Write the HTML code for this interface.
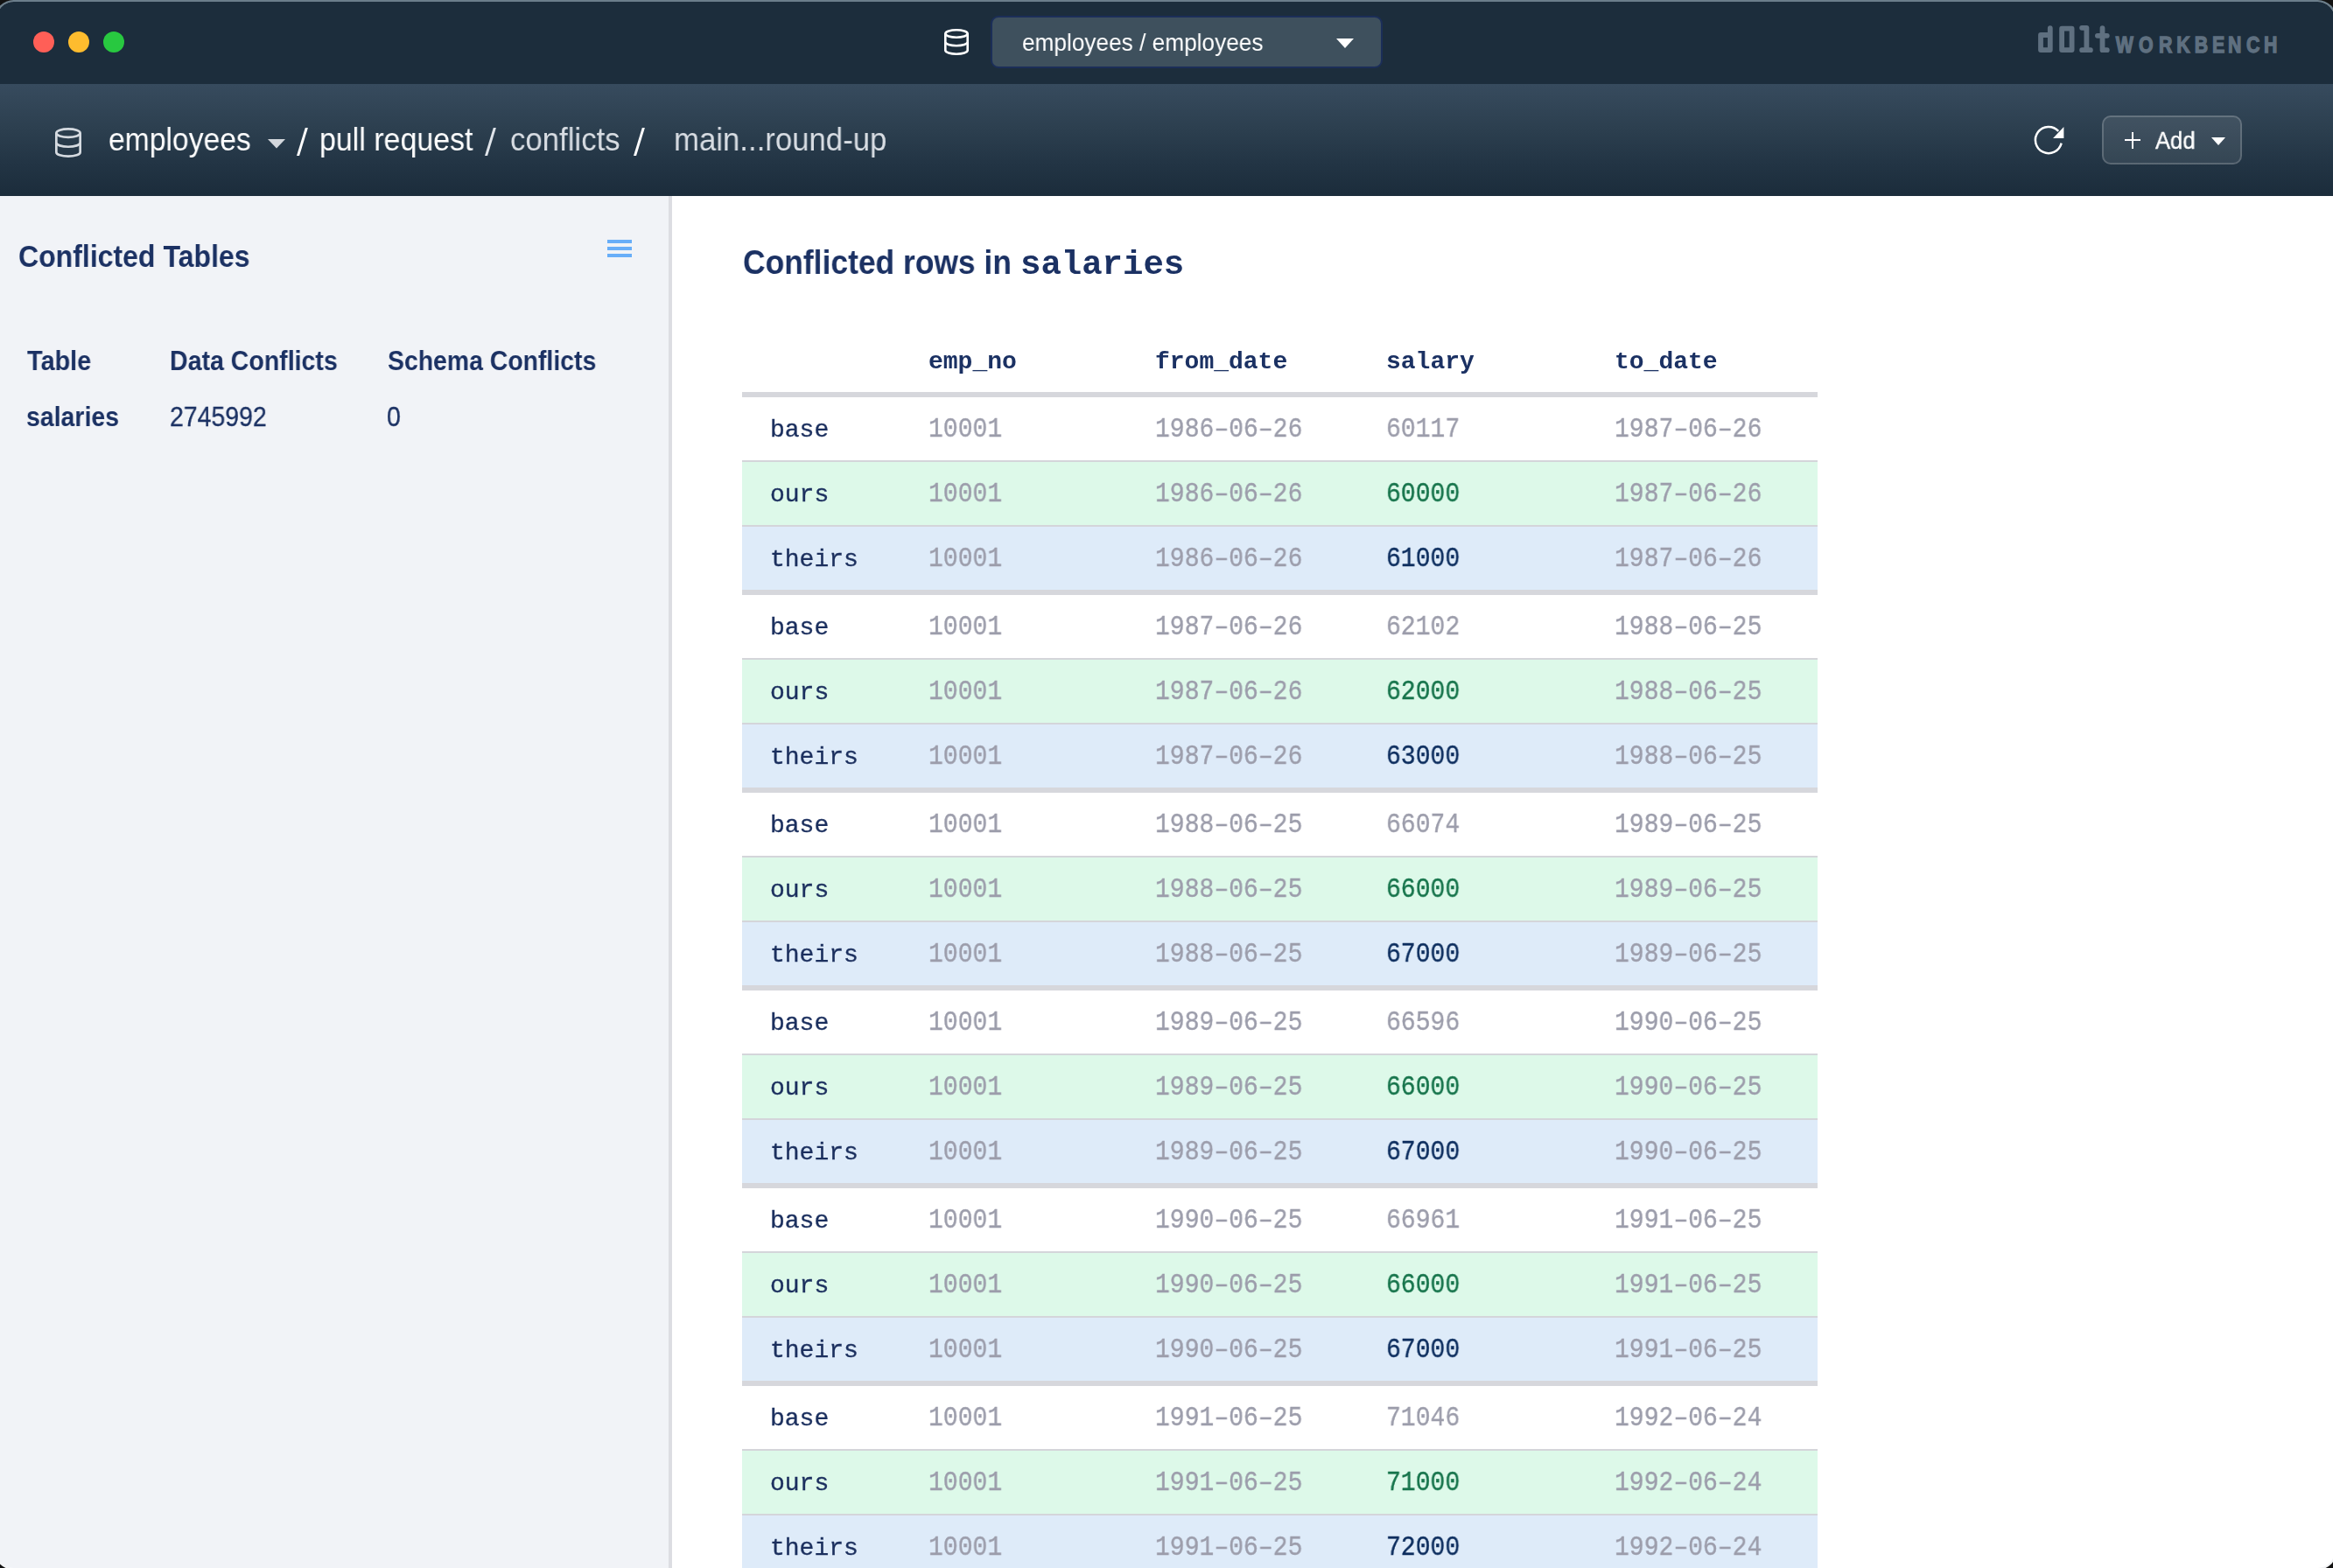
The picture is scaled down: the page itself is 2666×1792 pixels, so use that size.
<!DOCTYPE html>
<html><head><meta charset="utf-8"><title>Dolt Workbench</title>
<style>
html,body{margin:0;padding:0;}
body{width:2666px;height:1792px;overflow:hidden;position:relative;background:#121212;font-family:'Liberation Sans', sans-serif;}
#strip{position:absolute;left:-6px;top:0;width:2676px;height:1793.5px;border-radius:21.5px;background:linear-gradient(180deg,#6b7e8b 0px,#6b7e8b 60px,#f2f3f5 1600px);}
#win{position:absolute;left:-4px;top:2px;width:2672px;height:1789.5px;border-radius:19.5px;overflow:hidden;background:#ffffff;}
.t{position:absolute;white-space:pre;will-change:transform;}
.ab{position:absolute;}
.dot{position:absolute;width:24px;height:24px;border-radius:50%;}
#titlebar{position:absolute;left:0;top:0;width:2666px;height:96px;background:#1c2d3c;}
#selector{position:absolute;left:1132px;top:18px;width:444px;height:56px;border:2px solid #1b2e58;border-radius:9px;background:#3e505d;}
#navbar{position:absolute;left:0;top:96px;width:2666px;height:128px;background:linear-gradient(180deg,#374b5e 0%,#2c3f4f 40%,#223444 72%,#1b2c3b 100%);}
#addbtn{position:absolute;left:2402px;top:132px;width:156px;height:52px;border:2px solid rgba(255,255,255,0.19);border-radius:10px;background:rgba(255,255,255,0.085);}
#sidebar{position:absolute;left:0;top:224px;width:764px;height:1600px;background:#f1f3f7;border-right:4px solid #dcdde2;}
</style></head>
<body>
<div id="strip"></div>
<div id="win">
<div style="position:absolute;left:4px;top:-2px;width:2666px;height:1800px;">
<div id="titlebar"></div>
<div class="dot" style="left:38px;top:36px;background:#ff5f57"></div>
<div class="dot" style="left:78px;top:36px;background:#febc2e"></div>
<div class="dot" style="left:118px;top:36px;background:#28c840"></div>
<svg class="ab" style="left:1079px;top:33px" width="28" height="30" viewBox="0 0 28 30"><g fill="none" stroke="#ffffff" stroke-width="2.6"><ellipse cx="14.0" cy="5.5" rx="12.7" ry="4.2"/><path d="M1.3000000000000007 5.5 V24.5 A12.7 4.2 0 0 0 26.7 24.5 V5.5"/><path d="M1.3000000000000007 15.0 A12.7 4.2 0 0 0 26.7 15.0"/></g></svg>
<div id="selector"></div>
<div class="t" style="left:1167.5px;top:34.48px;font-family:'Liberation Sans', sans-serif;font-size:28.5px;line-height:28.5px;color:#ffffff;font-weight:400;transform:scaleX(0.92);transform-origin:0 0;">employees / employees</div>
<svg class="ab" style="left:1526px;top:43px" width="22" height="13" viewBox="0 0 22 13"><path d="M1 1 H21 L11 12 Z" fill="#ffffff"/></svg>
<svg class="ab" style="left:2300px;top:0px" width="340" height="96" viewBox="2300 0 340 96">
<g fill="none" stroke="#5f7080" stroke-width="5.8" stroke-linecap="round" stroke-linejoin="round">
<path d="M2342.8 32.2 V57.1 H2332 V40 H2342.8"/>
<path d="M2356.1 32.7 H2367.6 V57.1 H2356.1 Z"/>
<path d="M2379.1 31.8 H2384.4 V57.1 M2379.1 57.2 H2388.9"/>
<path d="M2402.5 32.2 V57.2 H2407.8 M2396.9 40.8 H2407.8"/>
</g>
<text transform="translate(2417.8 60) scale(0.8 1)" font-family="Liberation Sans" font-weight="bold" font-size="26.6" fill="#5f7080" stroke="#5f7080" stroke-width="1.4">W</text><text transform="translate(2443.9 60) scale(0.8 1)" font-family="Liberation Sans" font-weight="bold" font-size="26.6" fill="#5f7080" stroke="#5f7080" stroke-width="1.4">O</text><text transform="translate(2467.1 60) scale(0.8 1)" font-family="Liberation Sans" font-weight="bold" font-size="26.6" fill="#5f7080" stroke="#5f7080" stroke-width="1.4">R</text><text transform="translate(2487.2 60) scale(0.8 1)" font-family="Liberation Sans" font-weight="bold" font-size="26.6" fill="#5f7080" stroke="#5f7080" stroke-width="1.4">K</text><text transform="translate(2507.8 60) scale(0.8 1)" font-family="Liberation Sans" font-weight="bold" font-size="26.6" fill="#5f7080" stroke="#5f7080" stroke-width="1.4">B</text><text transform="translate(2527.9 60) scale(0.8 1)" font-family="Liberation Sans" font-weight="bold" font-size="26.6" fill="#5f7080" stroke="#5f7080" stroke-width="1.4">E</text><text transform="translate(2545.9 60) scale(0.8 1)" font-family="Liberation Sans" font-weight="bold" font-size="26.6" fill="#5f7080" stroke="#5f7080" stroke-width="1.4">N</text><text transform="translate(2566.9 60) scale(0.8 1)" font-family="Liberation Sans" font-weight="bold" font-size="26.6" fill="#5f7080" stroke="#5f7080" stroke-width="1.4">C</text><text transform="translate(2587.1 60) scale(0.8 1)" font-family="Liberation Sans" font-weight="bold" font-size="26.6" fill="#5f7080" stroke="#5f7080" stroke-width="1.4">H</text>
</svg>
<div id="navbar"></div>
<svg class="ab" style="left:63px;top:146px" width="30" height="34" viewBox="0 0 30 34"><g fill="none" stroke="#d5dae0" stroke-width="2.7"><ellipse cx="15.0" cy="6.110000000000001" rx="13.65" ry="4.760000000000001"/><path d="M1.3499999999999996 6.110000000000001 V27.889999999999997 A13.65 4.760000000000001 0 0 0 28.65 27.889999999999997 V6.110000000000001"/><path d="M1.3499999999999996 17.0 A13.65 4.760000000000001 0 0 0 28.65 17.0"/></g></svg>
<div class="t" style="left:124px;top:142.28px;font-family:'Liberation Sans', sans-serif;font-size:36.5px;line-height:36.5px;color:#ffffff;font-weight:400;transform:scaleX(0.922);transform-origin:0 0;">employees</div>
<svg class="ab" style="left:305px;top:158px" width="22" height="12" viewBox="0 0 22 12"><path d="M1 1 H21 L11 11.5 Z" fill="#d3d7dc"/></svg>
<svg class="ab" style="left:336.8px;top:144px" width="20" height="36" viewBox="336.8 144 20 36"><path d="M338.8 178 L341.90000000000003 178 L351.7 146 L348.6 146 Z" fill="#ffffff"/></svg>
<div class="t" style="left:365px;top:142.28px;font-family:'Liberation Sans', sans-serif;font-size:36.5px;line-height:36.5px;color:#ffffff;font-weight:400;transform:scaleX(0.93);transform-origin:0 0;">pull request</div>
<svg class="ab" style="left:551.6px;top:144px" width="20" height="36" viewBox="551.6 144 20 36"><path d="M553.6 178 L556.7 178 L566.5 146 L563.4 146 Z" fill="#dfe4ea"/></svg>
<div class="t" style="left:583px;top:142.28px;font-family:'Liberation Sans', sans-serif;font-size:36.5px;line-height:36.5px;color:#d8dde3;font-weight:400;transform:scaleX(0.953);transform-origin:0 0;">conflicts</div>
<svg class="ab" style="left:721.9px;top:144px" width="20" height="36" viewBox="721.9 144 20 36"><path d="M723.9 178 L727.0 178 L736.8 146 L733.6999999999999 146 Z" fill="#ffffff"/></svg>
<div class="t" style="left:769.5px;top:142.28px;font-family:'Liberation Sans', sans-serif;font-size:36.5px;line-height:36.5px;color:#d8dde3;font-weight:400;transform:scaleX(0.952);transform-origin:0 0;">main...round-up</div>
<svg class="ab" style="left:2322px;top:142px" width="40" height="38" viewBox="0 0 40 38">
<path d="M33.65 21.65 A15.1 15.1 0 1 1 30.2 7.9" fill="none" stroke="#ffffff" stroke-width="2.5"/>
<path d="M36.4 2.9 V16 H24.1 Z" fill="#ffffff"/>
</svg>
<div id="addbtn"></div>
<div class="ab" style="left:2427.8px;top:159px;width:18.6px;height:2.2px;background:#fff"></div>
<div class="ab" style="left:2436px;top:151px;width:2.2px;height:18.6px;background:#fff"></div>
<div class="t" style="left:2462.5px;top:146.62px;font-family:'Liberation Sans', sans-serif;font-size:27.5px;line-height:27.5px;color:#ffffff;font-weight:400;transform:scaleX(0.93);transform-origin:0 0;-webkit-text-stroke:0.4px #ffffff;">Add</div>
<svg class="ab" style="left:2526px;top:156px" width="18" height="11" viewBox="0 0 18 11"><path d="M1 1 H17 L9 10 Z" fill="#ffffff"/></svg>
<div id="sidebar"></div>
<div class="t" style="left:21px;top:276.32px;font-family:'Liberation Sans', sans-serif;font-size:35.5px;line-height:35.5px;color:#1b3163;font-weight:700;transform:scaleX(0.902);transform-origin:0 0;">Conflicted Tables</div>
<div class="ab" style="left:694px;top:274px;width:28px;height:4px;background:#68aef8"></div>
<div class="ab" style="left:694px;top:282px;width:28px;height:4px;background:#68aef8"></div>
<div class="ab" style="left:694px;top:290px;width:28px;height:4px;background:#68aef8"></div>
<div class="t" style="left:30.5px;top:396.65px;font-family:'Liberation Sans', sans-serif;font-size:31px;line-height:31px;color:#1b3163;font-weight:700;transform:scaleX(0.93);transform-origin:0 0;">Table</div>
<div class="t" style="left:193.5px;top:396.65px;font-family:'Liberation Sans', sans-serif;font-size:31px;line-height:31px;color:#1b3163;font-weight:700;transform:scaleX(0.92);transform-origin:0 0;">Data Conflicts</div>
<div class="t" style="left:442.5px;top:396.65px;font-family:'Liberation Sans', sans-serif;font-size:31px;line-height:31px;color:#1b3163;font-weight:700;transform:scaleX(0.916);transform-origin:0 0;">Schema Conflicts</div>
<div class="t" style="left:30px;top:461.15px;font-family:'Liberation Sans', sans-serif;font-size:31px;line-height:31px;color:#1b3163;font-weight:700;transform:scaleX(0.918);transform-origin:0 0;">salaries</div>
<div class="t" style="left:193.5px;top:461.15px;font-family:'Liberation Sans', sans-serif;font-size:31px;line-height:31px;color:#1b3163;font-weight:400;transform:scaleX(0.917);transform-origin:0 0;-webkit-text-stroke:0.3px #1b3163;">2745992</div>
<div class="t" style="left:442px;top:461.15px;font-family:'Liberation Sans', sans-serif;font-size:31px;line-height:31px;color:#1b3163;font-weight:400;transform:scaleX(0.917);transform-origin:0 0;-webkit-text-stroke:0.3px #1b3163;">0</div>
<div class="t" style="left:849px;top:280.35px;font-family:'Liberation Sans', sans-serif;font-size:39px;line-height:39px;color:#1b3163;font-weight:700;transform:scaleX(0.908);transform-origin:0 0;">Conflicted rows in</div>
<div class="t" style="left:1166px;top:283.86px;font-family:'Liberation Mono', monospace;font-size:39px;line-height:39px;color:#1b3163;font-weight:700;">salaries</div>
<div class="t" style="left:1061px;top:400.22px;font-family:'Liberation Mono', monospace;font-size:28px;line-height:28px;color:#1b3163;font-weight:700;">emp_no</div>
<div class="t" style="left:1320px;top:400.22px;font-family:'Liberation Mono', monospace;font-size:28px;line-height:28px;color:#1b3163;font-weight:700;">from_date</div>
<div class="t" style="left:1584px;top:400.22px;font-family:'Liberation Mono', monospace;font-size:28px;line-height:28px;color:#1b3163;font-weight:700;">salary</div>
<div class="t" style="left:1845px;top:400.22px;font-family:'Liberation Mono', monospace;font-size:28px;line-height:28px;color:#1b3163;font-weight:700;">to_date</div>
<div class="ab" style="left:848px;top:448px;width:1229px;height:6px;background:#d6d7dc"></div>
<div class="ab" style="left:848px;top:526px;width:1229px;height:2px;background:#d4d5da"></div>
<div class="ab" style="left:848px;top:528px;width:1229px;height:72px;background:#ddf9e9"></div>
<div class="ab" style="left:848px;top:600px;width:1229px;height:2px;background:#d4d5da"></div>
<div class="ab" style="left:848px;top:602px;width:1229px;height:72px;background:#deebf9"></div>
<div class="ab" style="left:848px;top:674px;width:1229px;height:6px;background:#d6d7dc"></div>
<div class="t" style="left:879.5px;top:477.72px;font-family:'Liberation Mono', monospace;font-size:28px;line-height:28px;color:#1b2f5e;font-weight:400;-webkit-text-stroke:0.35px #1b2f5e;">base</div>
<div class="t" style="left:1061px;top:475.44px;font-family:'Liberation Mono', monospace;font-size:31px;line-height:31px;color:#9c9dab;font-weight:400;transform:scaleX(0.905);transform-origin:0 0;-webkit-text-stroke:0.35px #9c9dab;">10001</div>
<div class="t" style="left:1320px;top:475.44px;font-family:'Liberation Mono', monospace;font-size:31px;line-height:31px;color:#9c9dab;font-weight:400;transform:scaleX(0.905);transform-origin:0 0;-webkit-text-stroke:0.35px #9c9dab;">1986&#8211;06&#8211;26</div>
<div class="t" style="left:1584px;top:475.44px;font-family:'Liberation Mono', monospace;font-size:31px;line-height:31px;color:#9c9dab;font-weight:400;transform:scaleX(0.905);transform-origin:0 0;-webkit-text-stroke:0.35px #9c9dab;">60117</div>
<div class="t" style="left:1845px;top:475.44px;font-family:'Liberation Mono', monospace;font-size:31px;line-height:31px;color:#9c9dab;font-weight:400;transform:scaleX(0.905);transform-origin:0 0;-webkit-text-stroke:0.35px #9c9dab;">1987&#8211;06&#8211;26</div>
<div class="t" style="left:879.5px;top:551.72px;font-family:'Liberation Mono', monospace;font-size:28px;line-height:28px;color:#1b2f5e;font-weight:400;-webkit-text-stroke:0.35px #1b2f5e;">ours</div>
<div class="t" style="left:1061px;top:549.44px;font-family:'Liberation Mono', monospace;font-size:31px;line-height:31px;color:#9c9dab;font-weight:400;transform:scaleX(0.905);transform-origin:0 0;-webkit-text-stroke:0.35px #9c9dab;">10001</div>
<div class="t" style="left:1320px;top:549.44px;font-family:'Liberation Mono', monospace;font-size:31px;line-height:31px;color:#9c9dab;font-weight:400;transform:scaleX(0.905);transform-origin:0 0;-webkit-text-stroke:0.35px #9c9dab;">1986&#8211;06&#8211;26</div>
<div class="t" style="left:1584px;top:549.44px;font-family:'Liberation Mono', monospace;font-size:31px;line-height:31px;color:#16744b;font-weight:400;transform:scaleX(0.905);transform-origin:0 0;-webkit-text-stroke:0.35px #16744b;">60000</div>
<div class="t" style="left:1845px;top:549.44px;font-family:'Liberation Mono', monospace;font-size:31px;line-height:31px;color:#9c9dab;font-weight:400;transform:scaleX(0.905);transform-origin:0 0;-webkit-text-stroke:0.35px #9c9dab;">1987&#8211;06&#8211;26</div>
<div class="t" style="left:879.5px;top:625.72px;font-family:'Liberation Mono', monospace;font-size:28px;line-height:28px;color:#1b2f5e;font-weight:400;-webkit-text-stroke:0.35px #1b2f5e;">theirs</div>
<div class="t" style="left:1061px;top:623.44px;font-family:'Liberation Mono', monospace;font-size:31px;line-height:31px;color:#9c9dab;font-weight:400;transform:scaleX(0.905);transform-origin:0 0;-webkit-text-stroke:0.35px #9c9dab;">10001</div>
<div class="t" style="left:1320px;top:623.44px;font-family:'Liberation Mono', monospace;font-size:31px;line-height:31px;color:#9c9dab;font-weight:400;transform:scaleX(0.905);transform-origin:0 0;-webkit-text-stroke:0.35px #9c9dab;">1986&#8211;06&#8211;26</div>
<div class="t" style="left:1584px;top:623.44px;font-family:'Liberation Mono', monospace;font-size:31px;line-height:31px;color:#0c2d5e;font-weight:400;transform:scaleX(0.905);transform-origin:0 0;-webkit-text-stroke:0.35px #0c2d5e;">61000</div>
<div class="t" style="left:1845px;top:623.44px;font-family:'Liberation Mono', monospace;font-size:31px;line-height:31px;color:#9c9dab;font-weight:400;transform:scaleX(0.905);transform-origin:0 0;-webkit-text-stroke:0.35px #9c9dab;">1987&#8211;06&#8211;26</div>
<div class="ab" style="left:848px;top:752px;width:1229px;height:2px;background:#d4d5da"></div>
<div class="ab" style="left:848px;top:754px;width:1229px;height:72px;background:#ddf9e9"></div>
<div class="ab" style="left:848px;top:826px;width:1229px;height:2px;background:#d4d5da"></div>
<div class="ab" style="left:848px;top:828px;width:1229px;height:72px;background:#deebf9"></div>
<div class="ab" style="left:848px;top:900px;width:1229px;height:6px;background:#d6d7dc"></div>
<div class="t" style="left:879.5px;top:703.72px;font-family:'Liberation Mono', monospace;font-size:28px;line-height:28px;color:#1b2f5e;font-weight:400;-webkit-text-stroke:0.35px #1b2f5e;">base</div>
<div class="t" style="left:1061px;top:701.44px;font-family:'Liberation Mono', monospace;font-size:31px;line-height:31px;color:#9c9dab;font-weight:400;transform:scaleX(0.905);transform-origin:0 0;-webkit-text-stroke:0.35px #9c9dab;">10001</div>
<div class="t" style="left:1320px;top:701.44px;font-family:'Liberation Mono', monospace;font-size:31px;line-height:31px;color:#9c9dab;font-weight:400;transform:scaleX(0.905);transform-origin:0 0;-webkit-text-stroke:0.35px #9c9dab;">1987&#8211;06&#8211;26</div>
<div class="t" style="left:1584px;top:701.44px;font-family:'Liberation Mono', monospace;font-size:31px;line-height:31px;color:#9c9dab;font-weight:400;transform:scaleX(0.905);transform-origin:0 0;-webkit-text-stroke:0.35px #9c9dab;">62102</div>
<div class="t" style="left:1845px;top:701.44px;font-family:'Liberation Mono', monospace;font-size:31px;line-height:31px;color:#9c9dab;font-weight:400;transform:scaleX(0.905);transform-origin:0 0;-webkit-text-stroke:0.35px #9c9dab;">1988&#8211;06&#8211;25</div>
<div class="t" style="left:879.5px;top:777.72px;font-family:'Liberation Mono', monospace;font-size:28px;line-height:28px;color:#1b2f5e;font-weight:400;-webkit-text-stroke:0.35px #1b2f5e;">ours</div>
<div class="t" style="left:1061px;top:775.44px;font-family:'Liberation Mono', monospace;font-size:31px;line-height:31px;color:#9c9dab;font-weight:400;transform:scaleX(0.905);transform-origin:0 0;-webkit-text-stroke:0.35px #9c9dab;">10001</div>
<div class="t" style="left:1320px;top:775.44px;font-family:'Liberation Mono', monospace;font-size:31px;line-height:31px;color:#9c9dab;font-weight:400;transform:scaleX(0.905);transform-origin:0 0;-webkit-text-stroke:0.35px #9c9dab;">1987&#8211;06&#8211;26</div>
<div class="t" style="left:1584px;top:775.44px;font-family:'Liberation Mono', monospace;font-size:31px;line-height:31px;color:#16744b;font-weight:400;transform:scaleX(0.905);transform-origin:0 0;-webkit-text-stroke:0.35px #16744b;">62000</div>
<div class="t" style="left:1845px;top:775.44px;font-family:'Liberation Mono', monospace;font-size:31px;line-height:31px;color:#9c9dab;font-weight:400;transform:scaleX(0.905);transform-origin:0 0;-webkit-text-stroke:0.35px #9c9dab;">1988&#8211;06&#8211;25</div>
<div class="t" style="left:879.5px;top:851.72px;font-family:'Liberation Mono', monospace;font-size:28px;line-height:28px;color:#1b2f5e;font-weight:400;-webkit-text-stroke:0.35px #1b2f5e;">theirs</div>
<div class="t" style="left:1061px;top:849.44px;font-family:'Liberation Mono', monospace;font-size:31px;line-height:31px;color:#9c9dab;font-weight:400;transform:scaleX(0.905);transform-origin:0 0;-webkit-text-stroke:0.35px #9c9dab;">10001</div>
<div class="t" style="left:1320px;top:849.44px;font-family:'Liberation Mono', monospace;font-size:31px;line-height:31px;color:#9c9dab;font-weight:400;transform:scaleX(0.905);transform-origin:0 0;-webkit-text-stroke:0.35px #9c9dab;">1987&#8211;06&#8211;26</div>
<div class="t" style="left:1584px;top:849.44px;font-family:'Liberation Mono', monospace;font-size:31px;line-height:31px;color:#0c2d5e;font-weight:400;transform:scaleX(0.905);transform-origin:0 0;-webkit-text-stroke:0.35px #0c2d5e;">63000</div>
<div class="t" style="left:1845px;top:849.44px;font-family:'Liberation Mono', monospace;font-size:31px;line-height:31px;color:#9c9dab;font-weight:400;transform:scaleX(0.905);transform-origin:0 0;-webkit-text-stroke:0.35px #9c9dab;">1988&#8211;06&#8211;25</div>
<div class="ab" style="left:848px;top:978px;width:1229px;height:2px;background:#d4d5da"></div>
<div class="ab" style="left:848px;top:980px;width:1229px;height:72px;background:#ddf9e9"></div>
<div class="ab" style="left:848px;top:1052px;width:1229px;height:2px;background:#d4d5da"></div>
<div class="ab" style="left:848px;top:1054px;width:1229px;height:72px;background:#deebf9"></div>
<div class="ab" style="left:848px;top:1126px;width:1229px;height:6px;background:#d6d7dc"></div>
<div class="t" style="left:879.5px;top:929.72px;font-family:'Liberation Mono', monospace;font-size:28px;line-height:28px;color:#1b2f5e;font-weight:400;-webkit-text-stroke:0.35px #1b2f5e;">base</div>
<div class="t" style="left:1061px;top:927.44px;font-family:'Liberation Mono', monospace;font-size:31px;line-height:31px;color:#9c9dab;font-weight:400;transform:scaleX(0.905);transform-origin:0 0;-webkit-text-stroke:0.35px #9c9dab;">10001</div>
<div class="t" style="left:1320px;top:927.44px;font-family:'Liberation Mono', monospace;font-size:31px;line-height:31px;color:#9c9dab;font-weight:400;transform:scaleX(0.905);transform-origin:0 0;-webkit-text-stroke:0.35px #9c9dab;">1988&#8211;06&#8211;25</div>
<div class="t" style="left:1584px;top:927.44px;font-family:'Liberation Mono', monospace;font-size:31px;line-height:31px;color:#9c9dab;font-weight:400;transform:scaleX(0.905);transform-origin:0 0;-webkit-text-stroke:0.35px #9c9dab;">66074</div>
<div class="t" style="left:1845px;top:927.44px;font-family:'Liberation Mono', monospace;font-size:31px;line-height:31px;color:#9c9dab;font-weight:400;transform:scaleX(0.905);transform-origin:0 0;-webkit-text-stroke:0.35px #9c9dab;">1989&#8211;06&#8211;25</div>
<div class="t" style="left:879.5px;top:1003.72px;font-family:'Liberation Mono', monospace;font-size:28px;line-height:28px;color:#1b2f5e;font-weight:400;-webkit-text-stroke:0.35px #1b2f5e;">ours</div>
<div class="t" style="left:1061px;top:1001.44px;font-family:'Liberation Mono', monospace;font-size:31px;line-height:31px;color:#9c9dab;font-weight:400;transform:scaleX(0.905);transform-origin:0 0;-webkit-text-stroke:0.35px #9c9dab;">10001</div>
<div class="t" style="left:1320px;top:1001.44px;font-family:'Liberation Mono', monospace;font-size:31px;line-height:31px;color:#9c9dab;font-weight:400;transform:scaleX(0.905);transform-origin:0 0;-webkit-text-stroke:0.35px #9c9dab;">1988&#8211;06&#8211;25</div>
<div class="t" style="left:1584px;top:1001.44px;font-family:'Liberation Mono', monospace;font-size:31px;line-height:31px;color:#16744b;font-weight:400;transform:scaleX(0.905);transform-origin:0 0;-webkit-text-stroke:0.35px #16744b;">66000</div>
<div class="t" style="left:1845px;top:1001.44px;font-family:'Liberation Mono', monospace;font-size:31px;line-height:31px;color:#9c9dab;font-weight:400;transform:scaleX(0.905);transform-origin:0 0;-webkit-text-stroke:0.35px #9c9dab;">1989&#8211;06&#8211;25</div>
<div class="t" style="left:879.5px;top:1077.72px;font-family:'Liberation Mono', monospace;font-size:28px;line-height:28px;color:#1b2f5e;font-weight:400;-webkit-text-stroke:0.35px #1b2f5e;">theirs</div>
<div class="t" style="left:1061px;top:1075.44px;font-family:'Liberation Mono', monospace;font-size:31px;line-height:31px;color:#9c9dab;font-weight:400;transform:scaleX(0.905);transform-origin:0 0;-webkit-text-stroke:0.35px #9c9dab;">10001</div>
<div class="t" style="left:1320px;top:1075.44px;font-family:'Liberation Mono', monospace;font-size:31px;line-height:31px;color:#9c9dab;font-weight:400;transform:scaleX(0.905);transform-origin:0 0;-webkit-text-stroke:0.35px #9c9dab;">1988&#8211;06&#8211;25</div>
<div class="t" style="left:1584px;top:1075.44px;font-family:'Liberation Mono', monospace;font-size:31px;line-height:31px;color:#0c2d5e;font-weight:400;transform:scaleX(0.905);transform-origin:0 0;-webkit-text-stroke:0.35px #0c2d5e;">67000</div>
<div class="t" style="left:1845px;top:1075.44px;font-family:'Liberation Mono', monospace;font-size:31px;line-height:31px;color:#9c9dab;font-weight:400;transform:scaleX(0.905);transform-origin:0 0;-webkit-text-stroke:0.35px #9c9dab;">1989&#8211;06&#8211;25</div>
<div class="ab" style="left:848px;top:1204px;width:1229px;height:2px;background:#d4d5da"></div>
<div class="ab" style="left:848px;top:1206px;width:1229px;height:72px;background:#ddf9e9"></div>
<div class="ab" style="left:848px;top:1278px;width:1229px;height:2px;background:#d4d5da"></div>
<div class="ab" style="left:848px;top:1280px;width:1229px;height:72px;background:#deebf9"></div>
<div class="ab" style="left:848px;top:1352px;width:1229px;height:6px;background:#d6d7dc"></div>
<div class="t" style="left:879.5px;top:1155.72px;font-family:'Liberation Mono', monospace;font-size:28px;line-height:28px;color:#1b2f5e;font-weight:400;-webkit-text-stroke:0.35px #1b2f5e;">base</div>
<div class="t" style="left:1061px;top:1153.44px;font-family:'Liberation Mono', monospace;font-size:31px;line-height:31px;color:#9c9dab;font-weight:400;transform:scaleX(0.905);transform-origin:0 0;-webkit-text-stroke:0.35px #9c9dab;">10001</div>
<div class="t" style="left:1320px;top:1153.44px;font-family:'Liberation Mono', monospace;font-size:31px;line-height:31px;color:#9c9dab;font-weight:400;transform:scaleX(0.905);transform-origin:0 0;-webkit-text-stroke:0.35px #9c9dab;">1989&#8211;06&#8211;25</div>
<div class="t" style="left:1584px;top:1153.44px;font-family:'Liberation Mono', monospace;font-size:31px;line-height:31px;color:#9c9dab;font-weight:400;transform:scaleX(0.905);transform-origin:0 0;-webkit-text-stroke:0.35px #9c9dab;">66596</div>
<div class="t" style="left:1845px;top:1153.44px;font-family:'Liberation Mono', monospace;font-size:31px;line-height:31px;color:#9c9dab;font-weight:400;transform:scaleX(0.905);transform-origin:0 0;-webkit-text-stroke:0.35px #9c9dab;">1990&#8211;06&#8211;25</div>
<div class="t" style="left:879.5px;top:1229.72px;font-family:'Liberation Mono', monospace;font-size:28px;line-height:28px;color:#1b2f5e;font-weight:400;-webkit-text-stroke:0.35px #1b2f5e;">ours</div>
<div class="t" style="left:1061px;top:1227.44px;font-family:'Liberation Mono', monospace;font-size:31px;line-height:31px;color:#9c9dab;font-weight:400;transform:scaleX(0.905);transform-origin:0 0;-webkit-text-stroke:0.35px #9c9dab;">10001</div>
<div class="t" style="left:1320px;top:1227.44px;font-family:'Liberation Mono', monospace;font-size:31px;line-height:31px;color:#9c9dab;font-weight:400;transform:scaleX(0.905);transform-origin:0 0;-webkit-text-stroke:0.35px #9c9dab;">1989&#8211;06&#8211;25</div>
<div class="t" style="left:1584px;top:1227.44px;font-family:'Liberation Mono', monospace;font-size:31px;line-height:31px;color:#16744b;font-weight:400;transform:scaleX(0.905);transform-origin:0 0;-webkit-text-stroke:0.35px #16744b;">66000</div>
<div class="t" style="left:1845px;top:1227.44px;font-family:'Liberation Mono', monospace;font-size:31px;line-height:31px;color:#9c9dab;font-weight:400;transform:scaleX(0.905);transform-origin:0 0;-webkit-text-stroke:0.35px #9c9dab;">1990&#8211;06&#8211;25</div>
<div class="t" style="left:879.5px;top:1303.72px;font-family:'Liberation Mono', monospace;font-size:28px;line-height:28px;color:#1b2f5e;font-weight:400;-webkit-text-stroke:0.35px #1b2f5e;">theirs</div>
<div class="t" style="left:1061px;top:1301.44px;font-family:'Liberation Mono', monospace;font-size:31px;line-height:31px;color:#9c9dab;font-weight:400;transform:scaleX(0.905);transform-origin:0 0;-webkit-text-stroke:0.35px #9c9dab;">10001</div>
<div class="t" style="left:1320px;top:1301.44px;font-family:'Liberation Mono', monospace;font-size:31px;line-height:31px;color:#9c9dab;font-weight:400;transform:scaleX(0.905);transform-origin:0 0;-webkit-text-stroke:0.35px #9c9dab;">1989&#8211;06&#8211;25</div>
<div class="t" style="left:1584px;top:1301.44px;font-family:'Liberation Mono', monospace;font-size:31px;line-height:31px;color:#0c2d5e;font-weight:400;transform:scaleX(0.905);transform-origin:0 0;-webkit-text-stroke:0.35px #0c2d5e;">67000</div>
<div class="t" style="left:1845px;top:1301.44px;font-family:'Liberation Mono', monospace;font-size:31px;line-height:31px;color:#9c9dab;font-weight:400;transform:scaleX(0.905);transform-origin:0 0;-webkit-text-stroke:0.35px #9c9dab;">1990&#8211;06&#8211;25</div>
<div class="ab" style="left:848px;top:1430px;width:1229px;height:2px;background:#d4d5da"></div>
<div class="ab" style="left:848px;top:1432px;width:1229px;height:72px;background:#ddf9e9"></div>
<div class="ab" style="left:848px;top:1504px;width:1229px;height:2px;background:#d4d5da"></div>
<div class="ab" style="left:848px;top:1506px;width:1229px;height:72px;background:#deebf9"></div>
<div class="ab" style="left:848px;top:1578px;width:1229px;height:6px;background:#d6d7dc"></div>
<div class="t" style="left:879.5px;top:1381.72px;font-family:'Liberation Mono', monospace;font-size:28px;line-height:28px;color:#1b2f5e;font-weight:400;-webkit-text-stroke:0.35px #1b2f5e;">base</div>
<div class="t" style="left:1061px;top:1379.44px;font-family:'Liberation Mono', monospace;font-size:31px;line-height:31px;color:#9c9dab;font-weight:400;transform:scaleX(0.905);transform-origin:0 0;-webkit-text-stroke:0.35px #9c9dab;">10001</div>
<div class="t" style="left:1320px;top:1379.44px;font-family:'Liberation Mono', monospace;font-size:31px;line-height:31px;color:#9c9dab;font-weight:400;transform:scaleX(0.905);transform-origin:0 0;-webkit-text-stroke:0.35px #9c9dab;">1990&#8211;06&#8211;25</div>
<div class="t" style="left:1584px;top:1379.44px;font-family:'Liberation Mono', monospace;font-size:31px;line-height:31px;color:#9c9dab;font-weight:400;transform:scaleX(0.905);transform-origin:0 0;-webkit-text-stroke:0.35px #9c9dab;">66961</div>
<div class="t" style="left:1845px;top:1379.44px;font-family:'Liberation Mono', monospace;font-size:31px;line-height:31px;color:#9c9dab;font-weight:400;transform:scaleX(0.905);transform-origin:0 0;-webkit-text-stroke:0.35px #9c9dab;">1991&#8211;06&#8211;25</div>
<div class="t" style="left:879.5px;top:1455.72px;font-family:'Liberation Mono', monospace;font-size:28px;line-height:28px;color:#1b2f5e;font-weight:400;-webkit-text-stroke:0.35px #1b2f5e;">ours</div>
<div class="t" style="left:1061px;top:1453.44px;font-family:'Liberation Mono', monospace;font-size:31px;line-height:31px;color:#9c9dab;font-weight:400;transform:scaleX(0.905);transform-origin:0 0;-webkit-text-stroke:0.35px #9c9dab;">10001</div>
<div class="t" style="left:1320px;top:1453.44px;font-family:'Liberation Mono', monospace;font-size:31px;line-height:31px;color:#9c9dab;font-weight:400;transform:scaleX(0.905);transform-origin:0 0;-webkit-text-stroke:0.35px #9c9dab;">1990&#8211;06&#8211;25</div>
<div class="t" style="left:1584px;top:1453.44px;font-family:'Liberation Mono', monospace;font-size:31px;line-height:31px;color:#16744b;font-weight:400;transform:scaleX(0.905);transform-origin:0 0;-webkit-text-stroke:0.35px #16744b;">66000</div>
<div class="t" style="left:1845px;top:1453.44px;font-family:'Liberation Mono', monospace;font-size:31px;line-height:31px;color:#9c9dab;font-weight:400;transform:scaleX(0.905);transform-origin:0 0;-webkit-text-stroke:0.35px #9c9dab;">1991&#8211;06&#8211;25</div>
<div class="t" style="left:879.5px;top:1529.72px;font-family:'Liberation Mono', monospace;font-size:28px;line-height:28px;color:#1b2f5e;font-weight:400;-webkit-text-stroke:0.35px #1b2f5e;">theirs</div>
<div class="t" style="left:1061px;top:1527.44px;font-family:'Liberation Mono', monospace;font-size:31px;line-height:31px;color:#9c9dab;font-weight:400;transform:scaleX(0.905);transform-origin:0 0;-webkit-text-stroke:0.35px #9c9dab;">10001</div>
<div class="t" style="left:1320px;top:1527.44px;font-family:'Liberation Mono', monospace;font-size:31px;line-height:31px;color:#9c9dab;font-weight:400;transform:scaleX(0.905);transform-origin:0 0;-webkit-text-stroke:0.35px #9c9dab;">1990&#8211;06&#8211;25</div>
<div class="t" style="left:1584px;top:1527.44px;font-family:'Liberation Mono', monospace;font-size:31px;line-height:31px;color:#0c2d5e;font-weight:400;transform:scaleX(0.905);transform-origin:0 0;-webkit-text-stroke:0.35px #0c2d5e;">67000</div>
<div class="t" style="left:1845px;top:1527.44px;font-family:'Liberation Mono', monospace;font-size:31px;line-height:31px;color:#9c9dab;font-weight:400;transform:scaleX(0.905);transform-origin:0 0;-webkit-text-stroke:0.35px #9c9dab;">1991&#8211;06&#8211;25</div>
<div class="ab" style="left:848px;top:1656px;width:1229px;height:2px;background:#d4d5da"></div>
<div class="ab" style="left:848px;top:1658px;width:1229px;height:72px;background:#ddf9e9"></div>
<div class="ab" style="left:848px;top:1730px;width:1229px;height:2px;background:#d4d5da"></div>
<div class="ab" style="left:848px;top:1732px;width:1229px;height:72px;background:#deebf9"></div>
<div class="ab" style="left:848px;top:1804px;width:1229px;height:6px;background:#d6d7dc"></div>
<div class="t" style="left:879.5px;top:1607.72px;font-family:'Liberation Mono', monospace;font-size:28px;line-height:28px;color:#1b2f5e;font-weight:400;-webkit-text-stroke:0.35px #1b2f5e;">base</div>
<div class="t" style="left:1061px;top:1605.44px;font-family:'Liberation Mono', monospace;font-size:31px;line-height:31px;color:#9c9dab;font-weight:400;transform:scaleX(0.905);transform-origin:0 0;-webkit-text-stroke:0.35px #9c9dab;">10001</div>
<div class="t" style="left:1320px;top:1605.44px;font-family:'Liberation Mono', monospace;font-size:31px;line-height:31px;color:#9c9dab;font-weight:400;transform:scaleX(0.905);transform-origin:0 0;-webkit-text-stroke:0.35px #9c9dab;">1991&#8211;06&#8211;25</div>
<div class="t" style="left:1584px;top:1605.44px;font-family:'Liberation Mono', monospace;font-size:31px;line-height:31px;color:#9c9dab;font-weight:400;transform:scaleX(0.905);transform-origin:0 0;-webkit-text-stroke:0.35px #9c9dab;">71046</div>
<div class="t" style="left:1845px;top:1605.44px;font-family:'Liberation Mono', monospace;font-size:31px;line-height:31px;color:#9c9dab;font-weight:400;transform:scaleX(0.905);transform-origin:0 0;-webkit-text-stroke:0.35px #9c9dab;">1992&#8211;06&#8211;24</div>
<div class="t" style="left:879.5px;top:1681.72px;font-family:'Liberation Mono', monospace;font-size:28px;line-height:28px;color:#1b2f5e;font-weight:400;-webkit-text-stroke:0.35px #1b2f5e;">ours</div>
<div class="t" style="left:1061px;top:1679.44px;font-family:'Liberation Mono', monospace;font-size:31px;line-height:31px;color:#9c9dab;font-weight:400;transform:scaleX(0.905);transform-origin:0 0;-webkit-text-stroke:0.35px #9c9dab;">10001</div>
<div class="t" style="left:1320px;top:1679.44px;font-family:'Liberation Mono', monospace;font-size:31px;line-height:31px;color:#9c9dab;font-weight:400;transform:scaleX(0.905);transform-origin:0 0;-webkit-text-stroke:0.35px #9c9dab;">1991&#8211;06&#8211;25</div>
<div class="t" style="left:1584px;top:1679.44px;font-family:'Liberation Mono', monospace;font-size:31px;line-height:31px;color:#16744b;font-weight:400;transform:scaleX(0.905);transform-origin:0 0;-webkit-text-stroke:0.35px #16744b;">71000</div>
<div class="t" style="left:1845px;top:1679.44px;font-family:'Liberation Mono', monospace;font-size:31px;line-height:31px;color:#9c9dab;font-weight:400;transform:scaleX(0.905);transform-origin:0 0;-webkit-text-stroke:0.35px #9c9dab;">1992&#8211;06&#8211;24</div>
<div class="t" style="left:879.5px;top:1755.72px;font-family:'Liberation Mono', monospace;font-size:28px;line-height:28px;color:#1b2f5e;font-weight:400;-webkit-text-stroke:0.35px #1b2f5e;">theirs</div>
<div class="t" style="left:1061px;top:1753.44px;font-family:'Liberation Mono', monospace;font-size:31px;line-height:31px;color:#9c9dab;font-weight:400;transform:scaleX(0.905);transform-origin:0 0;-webkit-text-stroke:0.35px #9c9dab;">10001</div>
<div class="t" style="left:1320px;top:1753.44px;font-family:'Liberation Mono', monospace;font-size:31px;line-height:31px;color:#9c9dab;font-weight:400;transform:scaleX(0.905);transform-origin:0 0;-webkit-text-stroke:0.35px #9c9dab;">1991&#8211;06&#8211;25</div>
<div class="t" style="left:1584px;top:1753.44px;font-family:'Liberation Mono', monospace;font-size:31px;line-height:31px;color:#0c2d5e;font-weight:400;transform:scaleX(0.905);transform-origin:0 0;-webkit-text-stroke:0.35px #0c2d5e;">72000</div>
<div class="t" style="left:1845px;top:1753.44px;font-family:'Liberation Mono', monospace;font-size:31px;line-height:31px;color:#9c9dab;font-weight:400;transform:scaleX(0.905);transform-origin:0 0;-webkit-text-stroke:0.35px #9c9dab;">1992&#8211;06&#8211;24</div>

</div>
</div>
</body></html>
